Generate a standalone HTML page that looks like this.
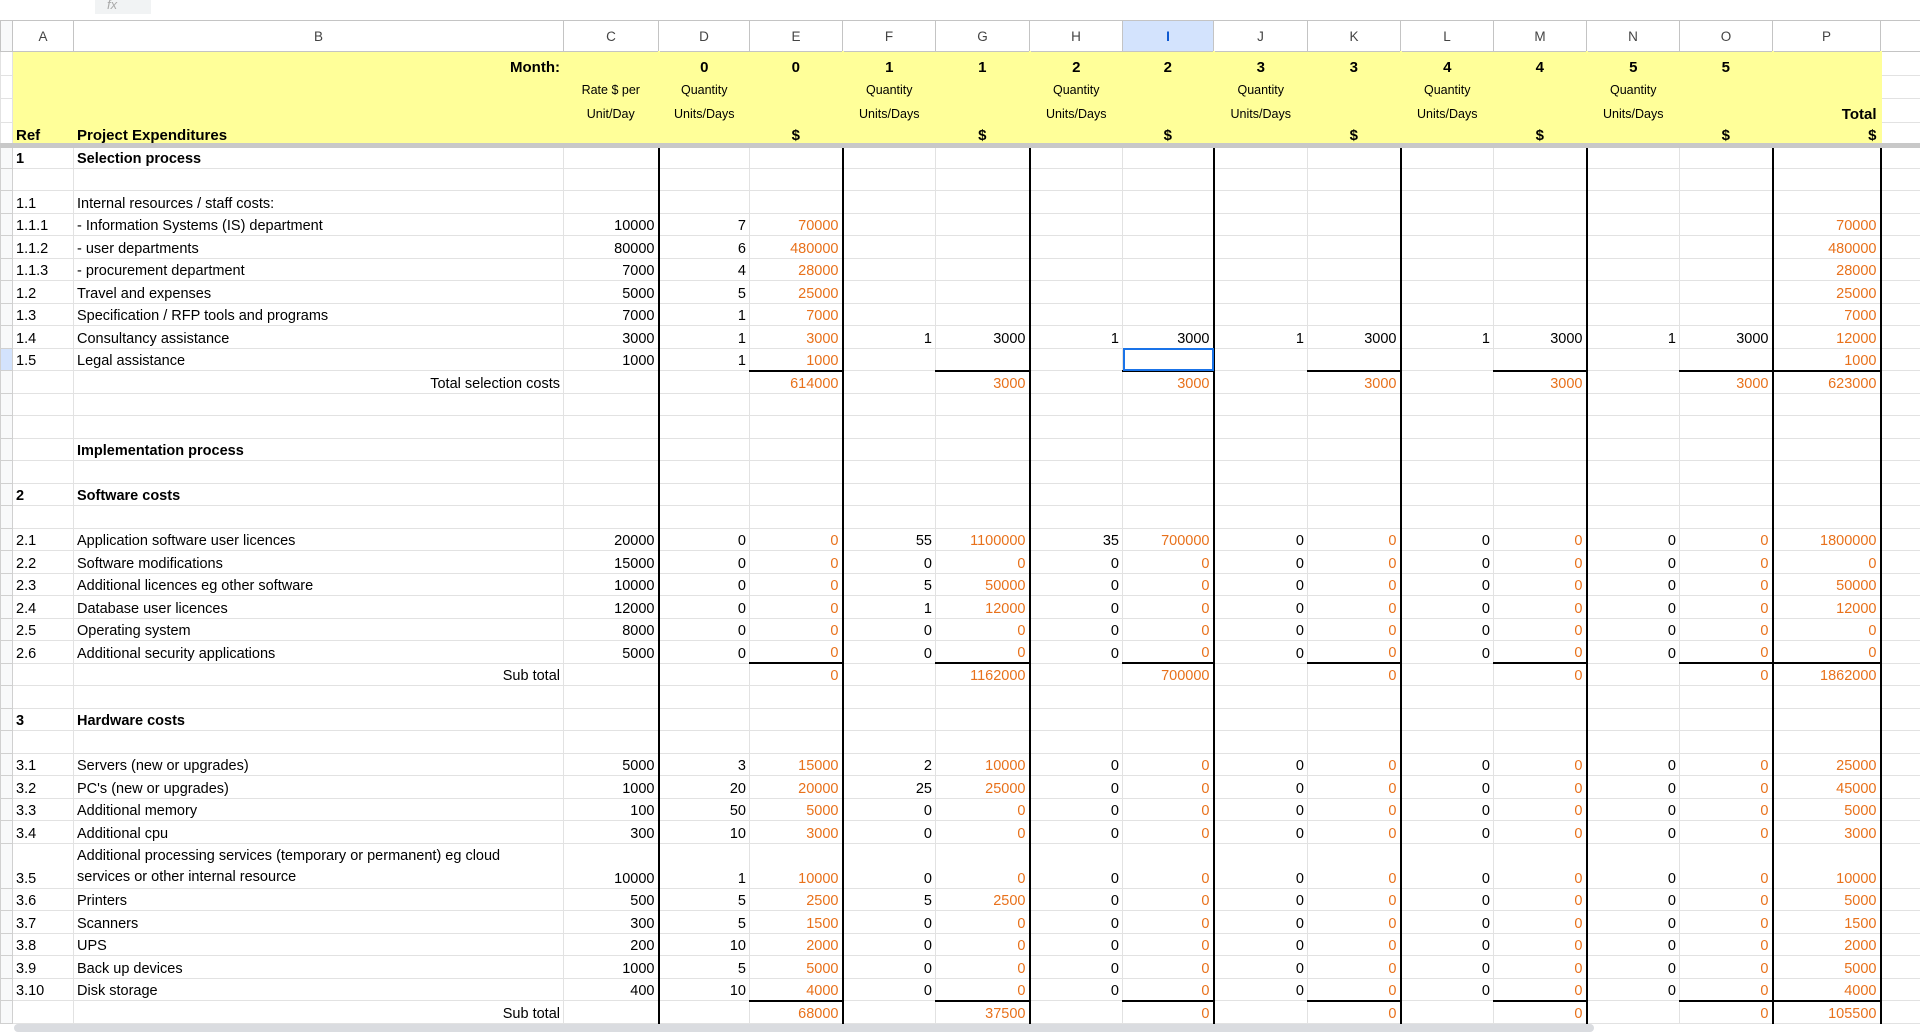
<!DOCTYPE html>
<html><head><meta charset="utf-8">
<style>
body{margin:0;width:1920px;height:1032px;overflow:hidden;background:#fff;font-family:"Liberation Sans",sans-serif;position:relative}
.top{position:absolute;left:0;top:0;width:1920px;height:20px;background:#fff;border-bottom:1px solid #c7c7c7}
.fx{position:absolute;left:95px;top:0;width:44px;height:14px;background:#f1f3f4;color:#aaa;font-style:italic;font-size:13px;padding-left:12px;line-height:10px}
table{position:absolute;left:0;top:20px;border-collapse:collapse;table-layout:fixed;width:1920px}
td{border:1px solid #e2e2e2;padding:0 3px;font-size:14.5px;line-height:17px;white-space:nowrap;overflow:hidden;vertical-align:bottom;color:#000}
thead.ch tr{height:31px}
thead.ch td{text-align:center;vertical-align:middle;color:#444;font-size:13.5px;border:1px solid #c4c4c4;background:#fff;padding:0}
thead.ch td:first-child{background:#f8f9fa}
thead.ch td.sel{background:#d3e3fd;color:#0b57d0;font-weight:bold}
tbody.hd tr{height:23.6px}
tbody.hd td{background:#ffff99;border-color:#ffff99;font-size:12.5px;text-align:center;line-height:15px}
tbody.hd td:first-child,tbody.hd td:nth-child(18){background:#fff;border-color:#e2e2e2}
tbody.hd tr:last-child td{border-bottom:5px solid #c8c8c8}
tbody.hd .b{font-weight:bold;font-size:15px}
tbody.hd .rt{text-align:right}
tbody.hd .lf{text-align:left}
tbody.d tr{height:22.5px}
tbody.d td:nth-child(n+4){text-align:right}
tbody.d td:nth-child(6),tbody.d td:nth-child(8),tbody.d td:nth-child(10),tbody.d td:nth-child(12),tbody.d td:nth-child(14),tbody.d td:nth-child(16),tbody.d td:nth-child(17){color:#e8711b}
td:nth-child(4),td:nth-child(6),td:nth-child(8),td:nth-child(10),td:nth-child(12),td:nth-child(14),td:nth-child(16),td:nth-child(17){border-right:2px solid #000}
thead.ch td{border-right:1px solid #c4c4c4 !important}
td:first-child{background:#f8f9fa;border-color:#d0d0d0;padding:0}
tbody.d td.k{color:#000 !important}
tr.t td:nth-child(6),tr.t td:nth-child(8),tr.t td:nth-child(10),tr.t td:nth-child(12),tr.t td:nth-child(14),tr.t td:nth-child(16),tr.t td:nth-child(17){border-top:2px solid #000}
tr.t td:nth-child(3){text-align:right}
.bo{font-weight:bold}
td.cur{outline:2px solid #1a73e8;outline-offset:-2px}
tbody.d tr.dbl{height:45px}
.sb{position:absolute;left:14px;top:1024px;width:1580px;height:8px;background:#dadce0;border-radius:4px}
</style></head><body>
<div class="top"><div class="fx">fx</div></div>
<table>
<colgroup><col style="width:12px"><col style="width:61px"><col style="width:490px"><col style="width:95px"><col style="width:91px"><col style="width:93px"><col style="width:93px"><col style="width:94px"><col style="width:93px"><col style="width:91px"><col style="width:94px"><col style="width:93px"><col style="width:93px"><col style="width:93px"><col style="width:93px"><col style="width:93px"><col style="width:108px"><col style="width:40px"></colgroup>
<thead class="ch"><tr><td></td><td>A</td><td>B</td><td>C</td><td>D</td><td>E</td><td>F</td><td>G</td><td>H</td><td class="sel">I</td><td>J</td><td>K</td><td>L</td><td>M</td><td>N</td><td>O</td><td>P</td><td></td></tr></thead>
<tbody class="hd">
<tr><td></td><td></td><td class="b rt">Month:</td><td></td><td class="b">0</td><td class="b">0</td><td class="b">1</td><td class="b">1</td><td class="b">2</td><td class="b">2</td><td class="b">3</td><td class="b">3</td><td class="b">4</td><td class="b">4</td><td class="b">5</td><td class="b">5</td><td></td><td></td></tr>
<tr><td></td><td></td><td></td><td>Rate $ per</td><td>Quantity</td><td></td><td>Quantity</td><td></td><td>Quantity</td><td></td><td>Quantity</td><td></td><td>Quantity</td><td></td><td>Quantity</td><td></td><td></td><td></td></tr>
<tr><td></td><td></td><td></td><td>Unit/Day</td><td>Units/Days</td><td></td><td>Units/Days</td><td></td><td>Units/Days</td><td></td><td>Units/Days</td><td></td><td>Units/Days</td><td></td><td>Units/Days</td><td></td><td class="b rt">Total</td><td></td></tr>
<tr><td></td><td class="b lf">Ref</td><td class="b lf">Project Expenditures</td><td></td><td></td><td class="b">$</td><td></td><td class="b">$</td><td></td><td class="b">$</td><td></td><td class="b">$</td><td></td><td class="b">$</td><td></td><td class="b">$</td><td class="b rt">$</td><td></td></tr>
</tbody>
<tbody class="d">
<tr><td></td><td class="bo">1</td><td class="bo">Selection process</td><td></td><td></td><td></td><td></td><td></td><td></td><td></td><td></td><td></td><td></td><td></td><td></td><td></td><td></td><td></td></tr>
<tr><td></td><td></td><td></td><td></td><td></td><td></td><td></td><td></td><td></td><td></td><td></td><td></td><td></td><td></td><td></td><td></td><td></td><td></td></tr>
<tr><td></td><td>1.1</td><td>Internal resources / staff costs:</td><td></td><td></td><td></td><td></td><td></td><td></td><td></td><td></td><td></td><td></td><td></td><td></td><td></td><td></td><td></td></tr>
<tr><td></td><td>1.1.1</td><td>- Information Systems (IS) department</td><td>10000</td><td>7</td><td>70000</td><td></td><td></td><td></td><td></td><td></td><td></td><td></td><td></td><td></td><td></td><td>70000</td><td></td></tr>
<tr><td></td><td>1.1.2</td><td>- user departments</td><td>80000</td><td>6</td><td>480000</td><td></td><td></td><td></td><td></td><td></td><td></td><td></td><td></td><td></td><td></td><td>480000</td><td></td></tr>
<tr><td></td><td>1.1.3</td><td>- procurement department</td><td>7000</td><td>4</td><td>28000</td><td></td><td></td><td></td><td></td><td></td><td></td><td></td><td></td><td></td><td></td><td>28000</td><td></td></tr>
<tr><td></td><td>1.2</td><td>Travel and expenses</td><td>5000</td><td>5</td><td>25000</td><td></td><td></td><td></td><td></td><td></td><td></td><td></td><td></td><td></td><td></td><td>25000</td><td></td></tr>
<tr><td></td><td>1.3</td><td>Specification / RFP tools and programs</td><td>7000</td><td>1</td><td>7000</td><td></td><td></td><td></td><td></td><td></td><td></td><td></td><td></td><td></td><td></td><td>7000</td><td></td></tr>
<tr><td></td><td>1.4</td><td>Consultancy assistance</td><td>3000</td><td>1</td><td>3000</td><td>1</td><td class="k">3000</td><td>1</td><td class="k">3000</td><td>1</td><td class="k">3000</td><td>1</td><td class="k">3000</td><td>1</td><td class="k">3000</td><td>12000</td><td></td></tr>
<tr><td style="background:#d3e3fd"></td><td>1.5</td><td>Legal assistance</td><td>1000</td><td>1</td><td>1000</td><td></td><td></td><td></td><td class="cur"></td><td></td><td></td><td></td><td></td><td></td><td></td><td>1000</td><td></td></tr>
<tr class="t"><td></td><td></td><td>Total selection costs</td><td></td><td></td><td>614000</td><td></td><td>3000</td><td></td><td>3000</td><td></td><td>3000</td><td></td><td>3000</td><td></td><td>3000</td><td>623000</td><td></td></tr>
<tr><td></td><td></td><td></td><td></td><td></td><td></td><td></td><td></td><td></td><td></td><td></td><td></td><td></td><td></td><td></td><td></td><td></td><td></td></tr>
<tr><td></td><td></td><td></td><td></td><td></td><td></td><td></td><td></td><td></td><td></td><td></td><td></td><td></td><td></td><td></td><td></td><td></td><td></td></tr>
<tr><td></td><td></td><td class="bo">Implementation process</td><td></td><td></td><td></td><td></td><td></td><td></td><td></td><td></td><td></td><td></td><td></td><td></td><td></td><td></td><td></td></tr>
<tr><td></td><td></td><td></td><td></td><td></td><td></td><td></td><td></td><td></td><td></td><td></td><td></td><td></td><td></td><td></td><td></td><td></td><td></td></tr>
<tr><td></td><td class="bo">2</td><td class="bo">Software costs</td><td></td><td></td><td></td><td></td><td></td><td></td><td></td><td></td><td></td><td></td><td></td><td></td><td></td><td></td><td></td></tr>
<tr><td></td><td></td><td></td><td></td><td></td><td></td><td></td><td></td><td></td><td></td><td></td><td></td><td></td><td></td><td></td><td></td><td></td><td></td></tr>
<tr><td></td><td>2.1</td><td>Application software user licences</td><td>20000</td><td>0</td><td>0</td><td>55</td><td>1100000</td><td>35</td><td>700000</td><td>0</td><td>0</td><td>0</td><td>0</td><td>0</td><td>0</td><td>1800000</td><td></td></tr>
<tr><td></td><td>2.2</td><td>Software modifications</td><td>15000</td><td>0</td><td>0</td><td>0</td><td>0</td><td>0</td><td>0</td><td>0</td><td>0</td><td>0</td><td>0</td><td>0</td><td>0</td><td>0</td><td></td></tr>
<tr><td></td><td>2.3</td><td>Additional licences eg other software</td><td>10000</td><td>0</td><td>0</td><td>5</td><td>50000</td><td>0</td><td>0</td><td>0</td><td>0</td><td>0</td><td>0</td><td>0</td><td>0</td><td>50000</td><td></td></tr>
<tr><td></td><td>2.4</td><td>Database user licences</td><td>12000</td><td>0</td><td>0</td><td>1</td><td>12000</td><td>0</td><td>0</td><td>0</td><td>0</td><td>0</td><td>0</td><td>0</td><td>0</td><td>12000</td><td></td></tr>
<tr><td></td><td>2.5</td><td>Operating system</td><td>8000</td><td>0</td><td>0</td><td>0</td><td>0</td><td>0</td><td>0</td><td>0</td><td>0</td><td>0</td><td>0</td><td>0</td><td>0</td><td>0</td><td></td></tr>
<tr><td></td><td>2.6</td><td>Additional security applications</td><td>5000</td><td>0</td><td>0</td><td>0</td><td>0</td><td>0</td><td>0</td><td>0</td><td>0</td><td>0</td><td>0</td><td>0</td><td>0</td><td>0</td><td></td></tr>
<tr class="t"><td></td><td></td><td>Sub total</td><td></td><td></td><td>0</td><td></td><td>1162000</td><td></td><td>700000</td><td></td><td>0</td><td></td><td>0</td><td></td><td>0</td><td>1862000</td><td></td></tr>
<tr><td></td><td></td><td></td><td></td><td></td><td></td><td></td><td></td><td></td><td></td><td></td><td></td><td></td><td></td><td></td><td></td><td></td><td></td></tr>
<tr><td></td><td class="bo">3</td><td class="bo">Hardware costs</td><td></td><td></td><td></td><td></td><td></td><td></td><td></td><td></td><td></td><td></td><td></td><td></td><td></td><td></td><td></td></tr>
<tr><td></td><td></td><td></td><td></td><td></td><td></td><td></td><td></td><td></td><td></td><td></td><td></td><td></td><td></td><td></td><td></td><td></td><td></td></tr>
<tr><td></td><td>3.1</td><td>Servers (new or upgrades)</td><td>5000</td><td>3</td><td>15000</td><td>2</td><td>10000</td><td>0</td><td>0</td><td>0</td><td>0</td><td>0</td><td>0</td><td>0</td><td>0</td><td>25000</td><td></td></tr>
<tr><td></td><td>3.2</td><td>PC's (new or upgrades)</td><td>1000</td><td>20</td><td>20000</td><td>25</td><td>25000</td><td>0</td><td>0</td><td>0</td><td>0</td><td>0</td><td>0</td><td>0</td><td>0</td><td>45000</td><td></td></tr>
<tr><td></td><td>3.3</td><td>Additional memory</td><td>100</td><td>50</td><td>5000</td><td>0</td><td>0</td><td>0</td><td>0</td><td>0</td><td>0</td><td>0</td><td>0</td><td>0</td><td>0</td><td>5000</td><td></td></tr>
<tr><td></td><td>3.4</td><td>Additional cpu</td><td>300</td><td>10</td><td>3000</td><td>0</td><td>0</td><td>0</td><td>0</td><td>0</td><td>0</td><td>0</td><td>0</td><td>0</td><td>0</td><td>3000</td><td></td></tr>
<tr class="dbl"><td></td><td>3.5</td><td style="line-height:21px">Additional processing services (temporary or permanent) eg cloud<br>services or other internal resource</td><td>10000</td><td>1</td><td>10000</td><td>0</td><td>0</td><td>0</td><td>0</td><td>0</td><td>0</td><td>0</td><td>0</td><td>0</td><td>0</td><td>10000</td><td></td></tr>
<tr><td></td><td>3.6</td><td>Printers</td><td>500</td><td>5</td><td>2500</td><td>5</td><td>2500</td><td>0</td><td>0</td><td>0</td><td>0</td><td>0</td><td>0</td><td>0</td><td>0</td><td>5000</td><td></td></tr>
<tr><td></td><td>3.7</td><td>Scanners</td><td>300</td><td>5</td><td>1500</td><td>0</td><td>0</td><td>0</td><td>0</td><td>0</td><td>0</td><td>0</td><td>0</td><td>0</td><td>0</td><td>1500</td><td></td></tr>
<tr><td></td><td>3.8</td><td>UPS</td><td>200</td><td>10</td><td>2000</td><td>0</td><td>0</td><td>0</td><td>0</td><td>0</td><td>0</td><td>0</td><td>0</td><td>0</td><td>0</td><td>2000</td><td></td></tr>
<tr><td></td><td>3.9</td><td>Back up devices</td><td>1000</td><td>5</td><td>5000</td><td>0</td><td>0</td><td>0</td><td>0</td><td>0</td><td>0</td><td>0</td><td>0</td><td>0</td><td>0</td><td>5000</td><td></td></tr>
<tr><td></td><td>3.10</td><td>Disk storage</td><td>400</td><td>10</td><td>4000</td><td>0</td><td>0</td><td>0</td><td>0</td><td>0</td><td>0</td><td>0</td><td>0</td><td>0</td><td>0</td><td>4000</td><td></td></tr>
<tr class="t"><td></td><td></td><td>Sub total</td><td></td><td></td><td>68000</td><td></td><td>37500</td><td></td><td>0</td><td></td><td>0</td><td></td><td>0</td><td></td><td>0</td><td>105500</td><td></td></tr>
</tbody>
</table>
<div class="sb"></div>
</body></html>
